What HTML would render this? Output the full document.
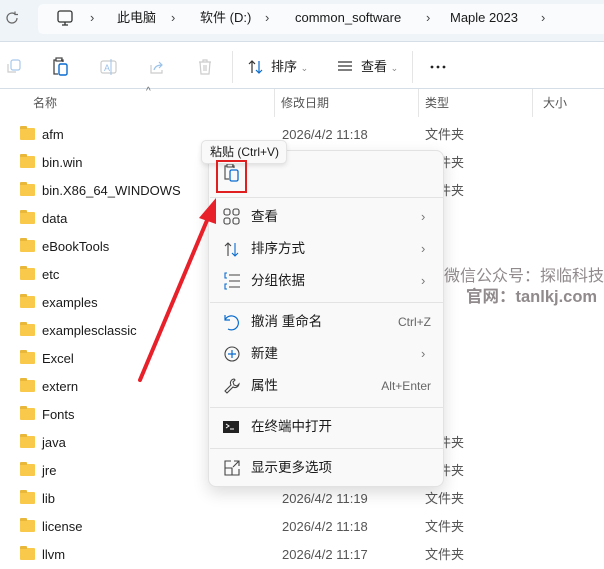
<!DOCTYPE html>
<html><head><meta charset="utf-8"><style>
*{margin:0;padding:0;box-sizing:border-box}
body{width:604px;height:566px;overflow:hidden;background:#fff;font-family:"Liberation Sans","Noto Sans CJK SC",sans-serif;font-size:13px;line-height:15px;color:#1a1a1a;position:relative}
.abs{position:absolute}
.top{left:0;top:0;width:604px;height:42px;background:#eff4f9;border-bottom:1px solid #d5dde6}
.addr{left:38px;top:4px;width:570px;height:30px;background:#f9fbfd;border-radius:5px}
.t{position:absolute;white-space:nowrap}
.tb{top:43px;left:0;width:604px;height:46px;border-bottom:1px solid #d5dde6}
.row{position:absolute;left:0;width:604px;height:28px}
.fold{position:absolute;left:20px;top:7px;width:15px;height:12px;background:#f8c94a;border-radius:1px}
.fold:before{content:"";position:absolute;left:0;top:-2px;width:7px;height:3px;background:#e9b73a;border-radius:1px 1px 0 0}
.name{position:absolute;left:42px;top:6px}
.date{position:absolute;left:282px;top:6px;color:#555}
.type{position:absolute;left:425px;top:6px;color:#555}
.menu{left:208px;top:150px;width:236px;height:337px;background:#f9f9f9;border:1px solid #e2e2e2;border-radius:8px;box-shadow:0 6px 16px rgba(0,0,0,.14)}
.mi{position:absolute;left:42px;font-size:13.5px}
.sc{position:absolute;right:12px;color:#666;font-size:12px}
.ch{position:absolute;left:212px;color:#777;font-size:13px}
.sep{position:absolute;left:1px;width:234px;height:1px;background:#e3e3e3}
.ic{position:absolute;left:14px}
</style></head><body>
<div class="abs top"></div>
<div class="abs addr"></div>
<svg class="abs" style="left:4px;top:10px" width="16" height="16" viewBox="0 0 16 16"><path d="M13 8a5 5 0 1 1-2-4M11 1.5v3h3" fill="none" stroke="#666" stroke-width="1.2"/></svg>
<svg class="abs" style="left:56px;top:9px" width="18" height="18" viewBox="0 0 18 18"><rect x="2" y="2" width="14" height="11" rx="2" fill="none" stroke="#333" stroke-width="1.3"/><path d="M6 16h6M9 13v3" stroke="#333" stroke-width="1.3"/></svg>
<div class="t" style="left:90px;top:10px;color:#444">›</div>
<div class="t" style="left:117px;top:10px">此电脑</div>
<div class="t" style="left:171px;top:10px;color:#444">›</div>
<div class="t" style="left:200px;top:10px">软件 (D:)</div>
<div class="t" style="left:265px;top:10px;color:#444">›</div>
<div class="t" style="left:295px;top:10px">common_software</div>
<div class="t" style="left:426px;top:10px;color:#444">›</div>
<div class="t" style="left:450px;top:10px">Maple 2023</div>
<div class="t" style="left:541px;top:10px;color:#444">›</div>

<div class="abs tb"></div>
<svg class="abs" style="left:4px;top:58px" width="18" height="18"><rect x="7" y="2" width="9" height="10" rx="2" fill="none" stroke="#a8c8ec" stroke-width="1.2"/><path d="M4 6v8h8" fill="none" stroke="#ccc" stroke-width="1.2"/></svg>
<svg class="abs" style="left:52px;top:57px" width="18" height="20"><path d="M4 3H2v14h4M9 3h2v2" fill="none" stroke="#444" stroke-width="1.3"/><rect x="4" y="1" width="6" height="3" fill="none" stroke="#444" stroke-width="1.2"/><rect x="7" y="7" width="8" height="11" rx="1.5" fill="none" stroke="#0a6ccf" stroke-width="1.4"/></svg>
<svg class="abs" style="left:99px;top:57px" width="20" height="20"><rect x="2" y="4" width="15" height="12" rx="2" fill="none" stroke="#ccc" stroke-width="1.2"/><text x="5" y="14" font-size="9" fill="#9cc2ea" font-family="Liberation Sans">A</text><path d="M12 2v16" stroke="#9cc2ea"/></svg>
<svg class="abs" style="left:148px;top:58px" width="18" height="18"><path d="M3 7v8h11v-3" fill="none" stroke="#ccc" stroke-width="1.2"/><path d="M6 12c1-4 4-5 8-5M11 4l3 3-3 3" fill="none" stroke="#9cc2ea" stroke-width="1.2"/></svg>
<svg class="abs" style="left:196px;top:58px" width="18" height="18"><path d="M3 4h12M7 4V2h4v2M4 4l1 12h8l1-12M8 7v6M10 7v6" fill="none" stroke="#ccc" stroke-width="1.2"/></svg>
<div class="abs" style="left:232px;top:51px;width:1px;height:32px;background:#e5e5e5"></div>
<svg class="abs" style="left:247px;top:58px" width="18" height="18"><path d="M5 15V3M2 6l3-3 3 3" fill="none" stroke="#333" stroke-width="1.2"/><path d="M12 3v12M9 12l3 3 3-3" fill="none" stroke="#0a6ccf" stroke-width="1.2"/></svg>
<div class="t" style="left:271px;top:59px">排序 <span style="color:#888;font-size:9px">⌄</span></div>
<svg class="abs" style="left:337px;top:59px" width="16" height="14"><path d="M1 3h14M1 7h14M1 11h14" stroke="#333" stroke-width="1.2"/></svg>
<div class="t" style="left:361px;top:59px">查看 <span style="color:#888;font-size:9px">⌄</span></div>
<div class="abs" style="left:412px;top:51px;width:1px;height:32px;background:#e5e5e5"></div>
<svg class="abs" style="left:430px;top:64px" width="18" height="6"><circle cx="2" cy="3" r="1.4" fill="#222"/><circle cx="8" cy="3" r="1.4" fill="#222"/><circle cx="14" cy="3" r="1.4" fill="#222"/></svg>

<div class="t" style="left:146px;top:84px;color:#666;font-size:10px">^</div>
<div class="t" style="left:33px;top:96px;color:#555;font-size:12px">名称</div>
<div class="t" style="left:281px;top:96px;color:#555;font-size:12px">修改日期</div>
<div class="t" style="left:425px;top:96px;color:#555;font-size:12px">类型</div>
<div class="t" style="left:543px;top:96px;color:#555;font-size:12px">大小</div>
<div class="abs" style="left:274px;top:89px;width:1px;height:28px;background:#e5e5e5"></div>
<div class="abs" style="left:418px;top:89px;width:1px;height:28px;background:#e5e5e5"></div>
<div class="abs" style="left:532px;top:89px;width:1px;height:28px;background:#e5e5e5"></div>

<div class="row" style="top:121px"><div class="fold"></div><div class="name">afm</div><div class="date">2026/4/2 11:18</div><div class="type">文件夹</div></div>
<div class="row" style="top:149px"><div class="fold"></div><div class="name">bin.win</div><div class="type">文件夹</div></div>
<div class="row" style="top:177px"><div class="fold"></div><div class="name">bin.X86_64_WINDOWS</div><div class="type">文件夹</div></div>
<div class="row" style="top:205px"><div class="fold"></div><div class="name">data</div></div>
<div class="row" style="top:233px"><div class="fold"></div><div class="name">eBookTools</div></div>
<div class="row" style="top:261px"><div class="fold"></div><div class="name">etc</div></div>
<div class="row" style="top:289px"><div class="fold"></div><div class="name">examples</div></div>
<div class="row" style="top:317px"><div class="fold"></div><div class="name">examplesclassic</div></div>
<div class="row" style="top:345px"><div class="fold"></div><div class="name">Excel</div></div>
<div class="row" style="top:373px"><div class="fold"></div><div class="name">extern</div></div>
<div class="row" style="top:401px"><div class="fold"></div><div class="name">Fonts</div></div>
<div class="row" style="top:429px"><div class="fold"></div><div class="name">java</div><div class="type">文件夹</div></div>
<div class="row" style="top:457px"><div class="fold"></div><div class="name">jre</div><div class="type">文件夹</div></div>
<div class="row" style="top:485px"><div class="fold"></div><div class="name">lib</div><div class="date">2026/4/2 11:19</div><div class="type">文件夹</div></div>
<div class="row" style="top:513px"><div class="fold"></div><div class="name">license</div><div class="date">2026/4/2 11:18</div><div class="type">文件夹</div></div>
<div class="row" style="top:541px"><div class="fold"></div><div class="name">llvm</div><div class="date">2026/4/2 11:17</div><div class="type">文件夹</div></div>

<div class="t" style="left:444px;top:268px;font-size:16px;line-height:18px;color:rgba(125,118,120,.85)">微信公众号：探临科技</div>
<div class="t" style="left:466px;top:288px;font-size:16.5px;line-height:18px;color:rgba(125,118,120,.85);font-weight:bold">官网：tanlkj.com</div>

<div class="abs menu">
 <svg class="abs" style="left:14px;top:12px" width="18" height="20"><path d="M4 3H2v13h4M9 3h2v2" fill="none" stroke="#555" stroke-width="1.2"/><rect x="4" y="1" width="6" height="3" fill="none" stroke="#555" stroke-width="1.1"/><rect x="7" y="7" width="8" height="11" rx="1.5" fill="none" stroke="#0a6ccf" stroke-width="1.3"/></svg>
 <div class="sep" style="top:46px"></div>
 <svg class="ic" style="top:57px" width="18" height="18"><g fill="none" stroke="#444" stroke-width="1.1"><rect x="1" y="1" width="6" height="6" rx="2"/><rect x="10" y="1" width="6" height="6" rx="2"/><rect x="1" y="10" width="6" height="6" rx="2"/><rect x="10" y="10" width="6" height="6" rx="2"/></g></svg>
 <div class="mi" style="top:58px">查看</div><div class="ch" style="top:58px">›</div>
 <svg class="ic" style="top:89px" width="18" height="18"><path d="M5 16V3M2 6l3-3 3 3" fill="none" stroke="#444" stroke-width="1.1"/><path d="M12 3v13M9 13l3 3 3-3" fill="none" stroke="#0a6ccf" stroke-width="1.1"/></svg>
 <div class="mi" style="top:90px">排序方式</div><div class="ch" style="top:90px">›</div>
 <svg class="ic" style="top:121px" width="18" height="18"><path d="M6 3h11M6 9h11M6 15h11" stroke="#444" stroke-width="1.1"/><path d="M4 1H2v5h2M4 12H2v5h2" fill="none" stroke="#0a6ccf" stroke-width="1.1"/></svg>
 <div class="mi" style="top:122px">分组依据</div><div class="ch" style="top:122px">›</div>
 <div class="sep" style="top:151px"></div>
 <svg class="ic" style="top:162px" width="18" height="18"><path d="M2 2v5h5M2 7a7 7 0 1 1 3 9" fill="none" stroke="#0a6ccf" stroke-width="1.2"/></svg>
 <div class="mi" style="top:163px">撤消 重命名</div><div class="sc" style="top:164px">Ctrl+Z</div>
 <svg class="ic" style="top:194px" width="18" height="18"><circle cx="9" cy="9" r="7" fill="none" stroke="#444" stroke-width="1.1"/><path d="M9 5v8M5 9h8" stroke="#0a6ccf" stroke-width="1.2"/></svg>
 <div class="mi" style="top:195px">新建</div><div class="ch" style="top:195px">›</div>
 <svg class="ic" style="top:226px" width="18" height="18"><path d="M11 2a4 4 0 0 0-3 6L2 14l2 2 6-6a4 4 0 0 0 6-3l-2 2-3-1-1-3 2-2z" fill="none" stroke="#444" stroke-width="1.1"/></svg>
 <div class="mi" style="top:227px">属性</div><div class="sc" style="top:228px">Alt+Enter</div>
 <div class="sep" style="top:256px"></div>
 <svg class="ic" style="top:268px" width="18" height="16"><rect x="0" y="2" width="16" height="12" fill="#222"/><path d="M3 5l3 2-3 2M7 10h4" stroke="#fff" fill="none"/></svg>
 <div class="mi" style="top:268px">在终端中打开</div>
 <div class="sep" style="top:297px"></div>
 <svg class="ic" style="top:308px" width="18" height="18"><path d="M8 2H2v14h14v-6M2 9h7v7M11 2h5v5M16 2l-6 6" fill="none" stroke="#444" stroke-width="1.1"/></svg>
 <div class="mi" style="top:309px">显示更多选项</div>
</div>

<div class="abs" style="left:201px;top:140px;width:86px;height:24px;background:#f9f9f9;border:1px solid #e3e3e3;border-radius:5px;box-shadow:0 2px 5px rgba(0,0,0,.1)"></div>
<div class="t" style="left:210px;top:145px;font-size:12px">粘贴 (Ctrl+V)</div>

<div class="abs" style="left:216px;top:160px;width:31px;height:33px;border:2px solid #e02020"></div>
<svg class="abs" style="left:0;top:0" width="604" height="566"><line x1="140" y1="380" x2="208" y2="218" stroke="#e8202a" stroke-width="4" stroke-linecap="round"/><polygon points="216,198 199,218 216,224" fill="#e8202a"/></svg>
</body></html>
